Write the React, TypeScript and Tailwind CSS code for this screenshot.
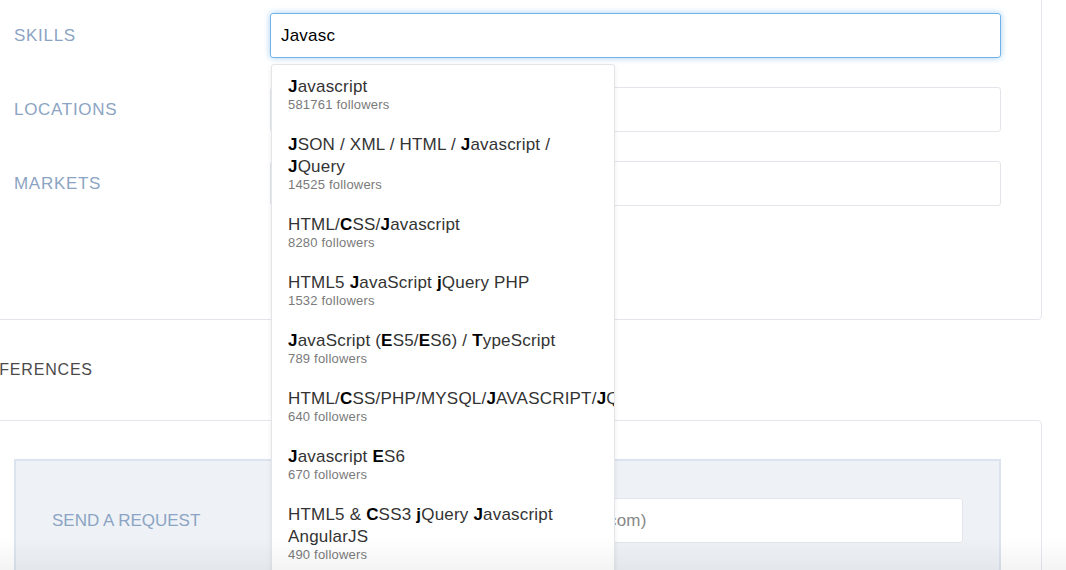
import React from "react";

interface Suggestion {
  parts: string[]; // even index = normal, odd index = bold match
  followers: number;
  nowrap?: boolean;
}

const suggestions: Suggestion[] = [
  { parts: ["", "J", "avascript"], followers: 581761 },
  { parts: ["", "J", "SON / XML / HTML / ", "J", "avascript / ", "J", "Query"], followers: 14525 },
  { parts: ["HTML/", "C", "SS/", "J", "avascript"], followers: 8280 },
  { parts: ["HTML5 ", "J", "avaScript ", "j", "Query PHP"], followers: 1532 },
  { parts: ["", "J", "avaScript (", "E", "S5/", "E", "S6) / ", "T", "ypeScript"], followers: 789 },
  {
    parts: ["HTML/", "C", "SS/PHP/MYSQL/", "J", "AVASCRIPT/", "J", "QUERY"],
    followers: 640,
    nowrap: true,
  },
  { parts: ["", "J", "avascript ", "E", "S6"], followers: 670 },
  { parts: ["HTML5 & ", "C", "SS3 ", "j", "Query ", "J", "avascript AngularJS"], followers: 490 },
];

const font = "font-['Helvetica_Neue','Liberation_Sans',Arial,sans-serif]";

const Label = ({ text }: { text: string }) => (
  <div className="w-[256px] shrink-0 text-[17px] tracking-[0.7px] text-[#8ca4c3]">{text}</div>
);

const Dropdown = () => (
  <div className="absolute left-[1px] top-[51px] w-[344px] h-[560px] overflow-hidden bg-white border border-[#e3e5e8] rounded-[3px] shadow-[0_2px_5px_rgba(0,0,0,0.08)] z-10 pt-[11px]">
    {suggestions.map((s, i) => (
      <div key={i} className="px-[16px] pb-[22px]">
        <div
          className={`text-[17px] tracking-[0.2px] leading-[22px] text-[#333] ${s.nowrap ? "whitespace-nowrap" : ""}`}
        >
          {s.parts.map((p, j) =>
            j % 2 === 1 ? (
              <b key={j} className="font-bold text-black">
                {p}
              </b>
            ) : (
              <span key={j}>{p}</span>
            )
          )}
        </div>
        <div className="text-[13px] tracking-[0.2px] leading-[14px] text-[#7a7a7a]">
          {s.followers} followers
        </div>
      </div>
    ))}
  </div>
);

export default function App() {
  return (
    <div className={`relative w-[1066px] h-[570px] overflow-hidden bg-white ${font}`}>
      <div className="ml-[-27px] w-[1069px]">
        {/* profile card */}
        <div className="mt-[-28px] border border-[#e3e7ec] rounded-[4px] px-[40px] pt-[40px] pb-[113px]">
          <div className="flex flex-col gap-[29px]">
            <div className="flex items-center">
              <Label text="SKILLS" />
              <div className="relative flex-1">
                <div className="h-[45px] flex items-center px-[10px] border border-[#72b2ea] rounded-[3px] shadow-[0_0_6px_rgba(102,175,233,0.6)] text-[17px] tracking-[0.2px] text-black">
                  Javasc
                </div>
                <Dropdown />
              </div>
            </div>
            <div className="flex items-center">
              <Label text="LOCATIONS" />
              <div className="flex-1 h-[45px] border border-[#e2e6ea] rounded-[3px]" />
            </div>
            <div className="flex items-center">
              <Label text="MARKETS" />
              <div className="flex-1 h-[45px] border border-[#e2e6ea] rounded-[3px]" />
            </div>
          </div>
        </div>

        {/* section heading */}
        <div className="h-[100px] flex items-center">
          <h3 className="ml-[-9px] text-[16px] tracking-[0.8px] text-[#4a4a4a]">PREFERENCES</h3>
        </div>

        {/* preferences card */}
        <div className="border border-[#e3e7ec] rounded-[4px] px-[40px] pt-[38px] h-[200px]">
          <div className="bg-[#eef2f7] border-2 border-[#dbe3ee] px-[36px] pt-[37px] pb-[40px]">
            <div className="flex items-center">
              <div className="w-[256px] shrink-0 text-[17px] text-[#8ca4c3]">SEND A REQUEST</div>
              <div className="flex-1 h-[45px] bg-white border border-[#e2e6ea] rounded-[3px] flex items-center px-[9px] text-[17px] tracking-[0.2px] text-[#888] whitespace-nowrap overflow-hidden">
                Email address (e.g. name@company.com)
              </div>
            </div>
          </div>
        </div>
      </div>

      {/* bottom fade */}
      <div className="pointer-events-none absolute left-0 right-0 bottom-0 h-[32px] bg-gradient-to-b from-transparent to-black/[0.045] z-20" />
    </div>
  );
}
